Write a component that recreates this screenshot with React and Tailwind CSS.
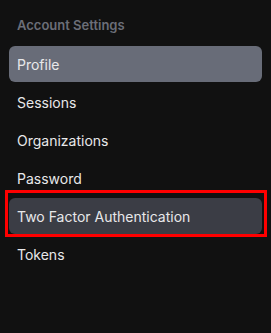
const items = [
  { label: "Profile", active: true },
  { label: "Sessions" },
  { label: "Organizations" },
  { label: "Password" },
  { label: "Two Factor Authentication", hover: true, marked: true },
  { label: "Tokens" },
];

export default function App() {
  return (
    <div
      className="min-h-screen bg-[#111111] px-[9px] pt-[15px]"
      style={{ fontFamily: "Inter, 'Noto Sans', sans-serif" }}
    >
      <h2 className="px-2 text-[13px] leading-5 font-semibold text-[#6b6e78]">
        Account Settings
      </h2>
      <nav className="mt-[11px] flex flex-col gap-[2px]">
        {items.map((item) => (
          <div
            key={item.label}
            className={
              "relative flex h-9 items-center rounded-md px-2 pt-px text-[14px] text-[#e8e8ea] " +
              (item.active ? "bg-[#686c78]" : item.hover ? "bg-[#3b3d45]" : "")
            }
          >
            {item.label}
            {item.marked && (
              <span className="pointer-events-none absolute -left-1 -top-2 -right-[5px] -bottom-[3px] border-[3px] border-[#ff0000]"></span>
            )}
          </div>
        ))}
      </nav>
    </div>
  );
}
